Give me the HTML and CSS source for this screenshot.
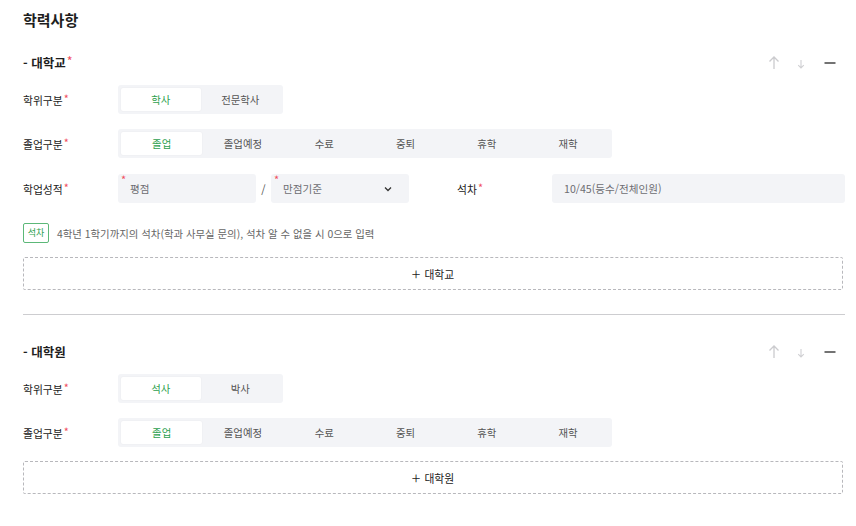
FILE: index.html
```html
<!DOCTYPE html>
<html lang="ko">
<head>
<meta charset="utf-8">
<title>학력사항</title>
<link rel="stylesheet" href="styles.css">
</head>
<body>
<div class="page">
  <h1 class="title">학력사항</h1>

  <section class="block">
    <div class="sec-head">
      <div class="sec-title">- 대학교<span class="req">*</span></div>
      <div class="tools">
        <svg class="ico up" width="12" height="15" viewBox="0 0 12 15"><path d="M6 14V2M1.5 6.5L6 2l4.5 4.5" fill="none" stroke="#cbcbce" stroke-width="1.3"/></svg>
        <svg class="ico down" width="10" height="10" viewBox="0 0 10 10"><path d="M5 1v8M2.2 6.2L5 9l2.8-2.8" fill="none" stroke="#d0d0d3" stroke-width="1.1"/></svg>
        <svg class="ico minus" width="12" height="12" viewBox="0 0 12 12"><path d="M0.5 6h11" stroke="#444" stroke-width="1.5"/></svg>
      </div>
    </div>

    <div class="row">
      <div class="label">학위구분<span class="req">*</span></div>
      <div class="seg two">
        <span class="opt on">학사</span>
        <span class="opt">전문학사</span>
      </div>
    </div>

    <div class="row">
      <div class="label">졸업구분<span class="req">*</span></div>
      <div class="seg">
        <span class="opt on">졸업</span>
        <span class="opt">졸업예정</span>
        <span class="opt">수료</span>
        <span class="opt">중퇴</span>
        <span class="opt">휴학</span>
        <span class="opt">재학</span>
      </div>
    </div>

    <div class="row grid2">
      <div class="cell">
        <div class="label">학업성적<span class="req">*</span></div>
        <div class="score">
          <div class="field"><span class="dot">*</span><span class="ph">평점</span></div>
          <span class="slash">/</span>
          <div class="field select"><span class="dot">*</span><span class="ph">만점기준</span>
            <svg class="chev" width="8" height="6" viewBox="0 0 8 6"><path d="M1 1.5l3 3 3-3" fill="none" stroke="#333" stroke-width="1.3"/></svg>
          </div>
        </div>
      </div>
      <div class="cell">
        <div class="label">석차<span class="req">*</span></div>
        <div class="field wide"><span class="ph">10/45(등수/전체인원)</span></div>
      </div>
    </div>

    <div class="note">
      <span class="badge">석차</span>
      <span class="note-text">4학년 1학기까지의 석차(학과 사무실 문의), 석차 알 수 없을 시 0으로 입력</span>
    </div>

    <div class="add"><span class="plus">+</span>대학교</div>
  </section>

  <hr class="divider">

  <section class="block">
    <div class="sec-head">
      <div class="sec-title">- 대학원</div>
      <div class="tools">
        <svg class="ico up" width="12" height="15" viewBox="0 0 12 15"><path d="M6 14V2M1.5 6.5L6 2l4.5 4.5" fill="none" stroke="#cbcbce" stroke-width="1.3"/></svg>
        <svg class="ico down" width="10" height="10" viewBox="0 0 10 10"><path d="M5 1v8M2.2 6.2L5 9l2.8-2.8" fill="none" stroke="#d0d0d3" stroke-width="1.1"/></svg>
        <svg class="ico minus" width="12" height="12" viewBox="0 0 12 12"><path d="M0.5 6h11" stroke="#444" stroke-width="1.5"/></svg>
      </div>
    </div>

    <div class="row">
      <div class="label">학위구분<span class="req">*</span></div>
      <div class="seg two">
        <span class="opt on">석사</span>
        <span class="opt">박사</span>
      </div>
    </div>

    <div class="row">
      <div class="label">졸업구분<span class="req">*</span></div>
      <div class="seg">
        <span class="opt on">졸업</span>
        <span class="opt">졸업예정</span>
        <span class="opt">수료</span>
        <span class="opt">중퇴</span>
        <span class="opt">휴학</span>
        <span class="opt">재학</span>
      </div>
    </div>

    <div class="add"><span class="plus">+</span>대학원</div>
  </section>
</div>
</body>
</html>
```

FILE: styles.css
```css
* { box-sizing: border-box; }
html, body { margin: 0; padding: 0; background: #fff; }
body {
  font-family: "Noto Sans CJK KR", "Noto Sans", sans-serif;
  color: #222;
  width: 856px;
  height: 526px;
  overflow: hidden;
}
.page { padding: 9px 11px 0 23px; }
.title {
  margin: 0;
  font-size: 15px;
  font-weight: 700;
  line-height: 22px;
  height: 22px;
  color: #1e1e1e;
}
.block { display: flex; flex-direction: column; }
.sec-head {
  margin-top: 21px;
  height: 20px;
  display: flex;
  align-items: center;
  justify-content: space-between;
}
.sec-title { font-size: 12.5px; font-weight: 700; color: #1e1e1e; }
.req { color: #f04e5e; font-weight: 400; margin-left: 1px; position: relative; top: -2px; }
.tools { display: flex; align-items: center; padding-right: 9px; }
.ico { display: block; }
.up { margin-right: 16px; margin-top: 1px; }
.down { margin-right: 18px; margin-top: 4px; }
.minus { margin-top: 2px; }

.row { display: flex; align-items: center; margin-top: 15px; }
.sec-head + .row { margin-top: 13px; }
.label { width: 95px; flex: none; font-size: 10.8px; color: #222; }
.seg {
  display: flex;
  background: #f3f4f7;
  border-radius: 3px;
  padding: 3px;
}
.opt {
  width: 81.3px;
  height: 23px;
  line-height: 23px;
  text-align: center;
  font-size: 10.4px;
  color: #555;
}
.seg.two .opt { width: 79.5px; }
.opt.on {
  background: #fff;
  color: #2e9f4f;
  border-radius: 2px;
  box-shadow: 0 0 2px rgba(0,0,0,0.06);
}

.grid2 { display: grid; grid-template-columns: 388px 388px; column-gap: 46px; margin-top: 16px; }
.cell { display: flex; align-items: center; }
.score { display: flex; align-items: center; }
.field {
  position: relative;
  height: 29px;
  width: 138px;
  background: #f3f4f7;
  border-radius: 3px;
  display: flex;
  align-items: center;
  padding-left: 12px;
}
.field.wide { width: 293px; }
.ph { font-size: 10.6px; color: #6d6d72; }
.dot {
  position: absolute;
  left: 3px;
  top: 0px;
  font-size: 11px;
  line-height: 11px;
  color: #f04e5e;
}
.slash { width: 15px; text-align: center; font-size: 11px; color: #555; }
.select .chev { position: absolute; right: 17px; top: 12px; }

.note { display: flex; align-items: center; margin-top: 20px; }
.badge {
  height: 20px;
  width: 26px;
  border: 1px solid #5cb878;
  border-radius: 2px;
  color: #2e9f4f;
  font-size: 9px;
  line-height: 18px;
  text-align: center;
}
.note-text { margin-left: 8px; font-size: 10.4px; color: #666; }

.add {
  margin-top: 14px;
  height: 33px;
  width: 820px;
  border: 1px dashed #b8b8bc;
  border-radius: 2px;
  display: flex;
  align-items: center;
  justify-content: center;
  font-size: 10.8px;
  color: #222;
}
.plus { font-size: 16px; font-weight: 300; margin-right: 4px; line-height: 1; position: relative; top: -1px; }
.divider {
  margin: 24px 0 0 0;
  width: 822px;
  border: 0;
  border-top: 1px solid #cdcdd0;
  height: 0;
}
.divider + .block .sec-head { margin-top: 26px; }
```
